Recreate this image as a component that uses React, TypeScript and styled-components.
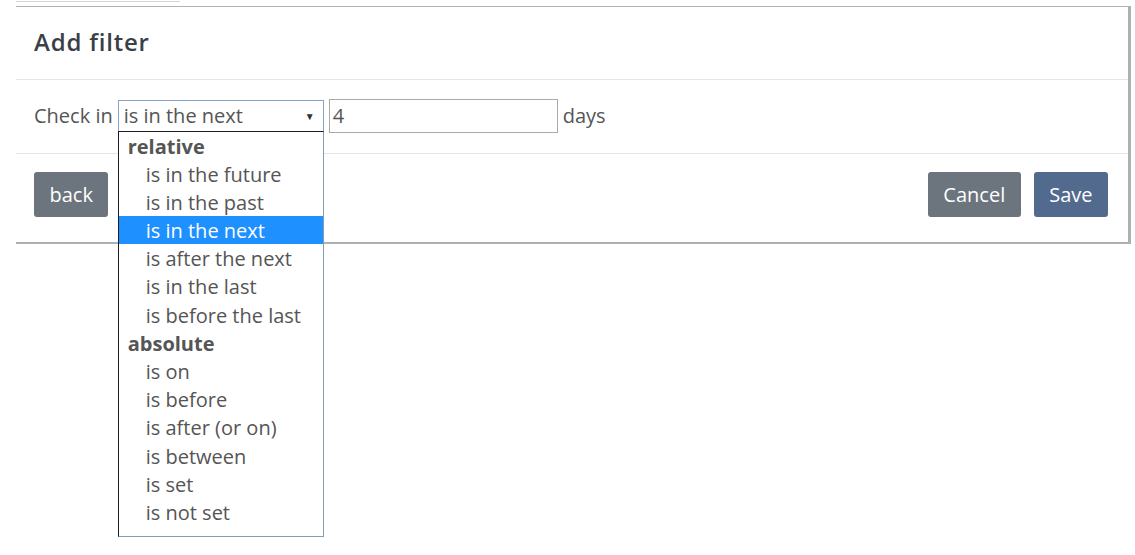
import React from 'react'
import styled, { createGlobalStyle } from 'styled-components'

const GlobalStyle = createGlobalStyle`
  html, body {
    margin: 0;
    padding: 0;
    background: #ffffff;
    font-family: "Open Sans", "Liberation Sans", sans-serif;
  }
`

const Page = styled.div`
  position: relative;
  width: 1135px;
  height: 555px;
  padding: 6px 0 0 16px;
  box-sizing: border-box;
  overflow: hidden;
`

const BackdropLine = styled.div`
  position: absolute;
  top: 1px;
  left: 16px;
  width: 164px;
  height: 1px;
  background: #d6d6d6;
`

const Modal = styled.div`
  position: relative;
  width: 1115px;
  box-sizing: border-box;
  background: #fff;
  border-top: 1px solid #b0b0b0;
  border-right: 3px solid #b0b0b0;
  border-bottom: 2px solid #b0b0b0;
`

const Header = styled.div`
  height: 69px;
  display: flex;
  align-items: center;
  padding: 0 18px 3px;
  border-bottom: 1px solid #e5e5e5;
`

const Title = styled.h4`
  margin: 0;
  font-family: "Open Sans", "Liberation Sans", sans-serif;
  font-weight: 600;
  font-size: 24px;
  letter-spacing: 0.8px;
  color: #3a3f48;
`

const Body = styled.div`
  height: 71px;
  display: flex;
  align-items: center;
  gap: 5px;
  padding: 0 18px 2px;
  border-bottom: 1px solid #e5e5e5;
  font-size: 20px;
  color: #555;
`

const Label = styled.span``

const SelectWrap = styled.div`
  position: relative;
`

const SelectBox = styled.div`
  width: 206px;
  height: 32px;
  box-sizing: border-box;
  border: 1px solid #86a3c9;
  display: flex;
  align-items: center;
  justify-content: space-between;
  padding: 0 8px 0 5px;
  color: #555;
  font-size: 20px;
`

const Arrow = styled.span`
  font-size: 10px;
  color: #333;
`

const NumberInput = styled.div`
  width: 229px;
  height: 34px;
  box-sizing: border-box;
  border: 1px solid #aaa;
  display: flex;
  align-items: center;
  padding: 0 3px;
  color: #555;
  font-size: 20px;
`

const Unit = styled.span``

const Dropdown = styled.ul`
  position: absolute;
  top: 31px;
  left: 0;
  z-index: 5;
  width: 206px;
  height: 406px;
  box-sizing: border-box;
  margin: 0;
  padding: 0;
  list-style: none;
  background: #fff;
  border: 1px solid #7f9db9;
  border-left-color: #1c1c28;
  border-top-color: #1c1c28;
  font-size: 20px;
  color: #555;
`

const Row = styled.li<{ $group?: boolean; $active?: boolean }>`
  height: 28.2px;
  line-height: 29px;
  padding-left: ${(p) => (p.$group ? '9px' : '27px')};
  font-weight: ${(p) => (p.$group ? 700 : 400)};
  background: ${(p) => (p.$active ? '#1e90ff' : 'transparent')};
  color: ${(p) => (p.$active ? '#fff' : '#555')};
  white-space: nowrap;
`

const Footer = styled.div`
  display: flex;
  align-items: center;
  justify-content: space-between;
  padding: 18px 20px 25px 18px;
`

const Actions = styled.div`
  display: flex;
  gap: 13px;
`

const Button = styled.button<{ $primary?: boolean }>`
  height: 45px;
  padding: 0 15.5px;
  border: none;
  border-radius: 3px;
  background: ${(p) => (p.$primary ? '#536a8f' : '#6c757d')};
  color: #fff;
  font-family: "Open Sans", "Liberation Sans", sans-serif;
  font-size: 20px;
  cursor: pointer;
`

const options: { label: string; group?: boolean; active?: boolean }[] = [
  { label: 'relative', group: true },
  { label: 'is in the future' },
  { label: 'is in the past' },
  { label: 'is in the next', active: true },
  { label: 'is after the next' },
  { label: 'is in the last' },
  { label: 'is before the last' },
  { label: 'absolute', group: true },
  { label: 'is on' },
  { label: 'is before' },
  { label: 'is after (or on)' },
  { label: 'is between' },
  { label: 'is set' },
  { label: 'is not set' },
]

const App: React.FC = () => {
  return (
    <Page>
      <GlobalStyle />
      <BackdropLine />
      <Modal>
        <Header>
          <Title>Add filter</Title>
        </Header>
        <Body>
          <Label>Check in</Label>
          <SelectWrap>
            <SelectBox>
              <span>is in the next</span>
              <Arrow>▼</Arrow>
            </SelectBox>
            <Dropdown>
              {options.map((o) => (
                <Row key={o.label} $group={o.group} $active={o.active}>
                  {o.label}
                </Row>
              ))}
            </Dropdown>
          </SelectWrap>
          <NumberInput>4</NumberInput>
          <Unit>days</Unit>
        </Body>
        <Footer>
          <Button>back</Button>
          <Actions>
            <Button>Cancel</Button>
            <Button $primary>Save</Button>
          </Actions>
        </Footer>
      </Modal>
    </Page>
  )
}

export default App
